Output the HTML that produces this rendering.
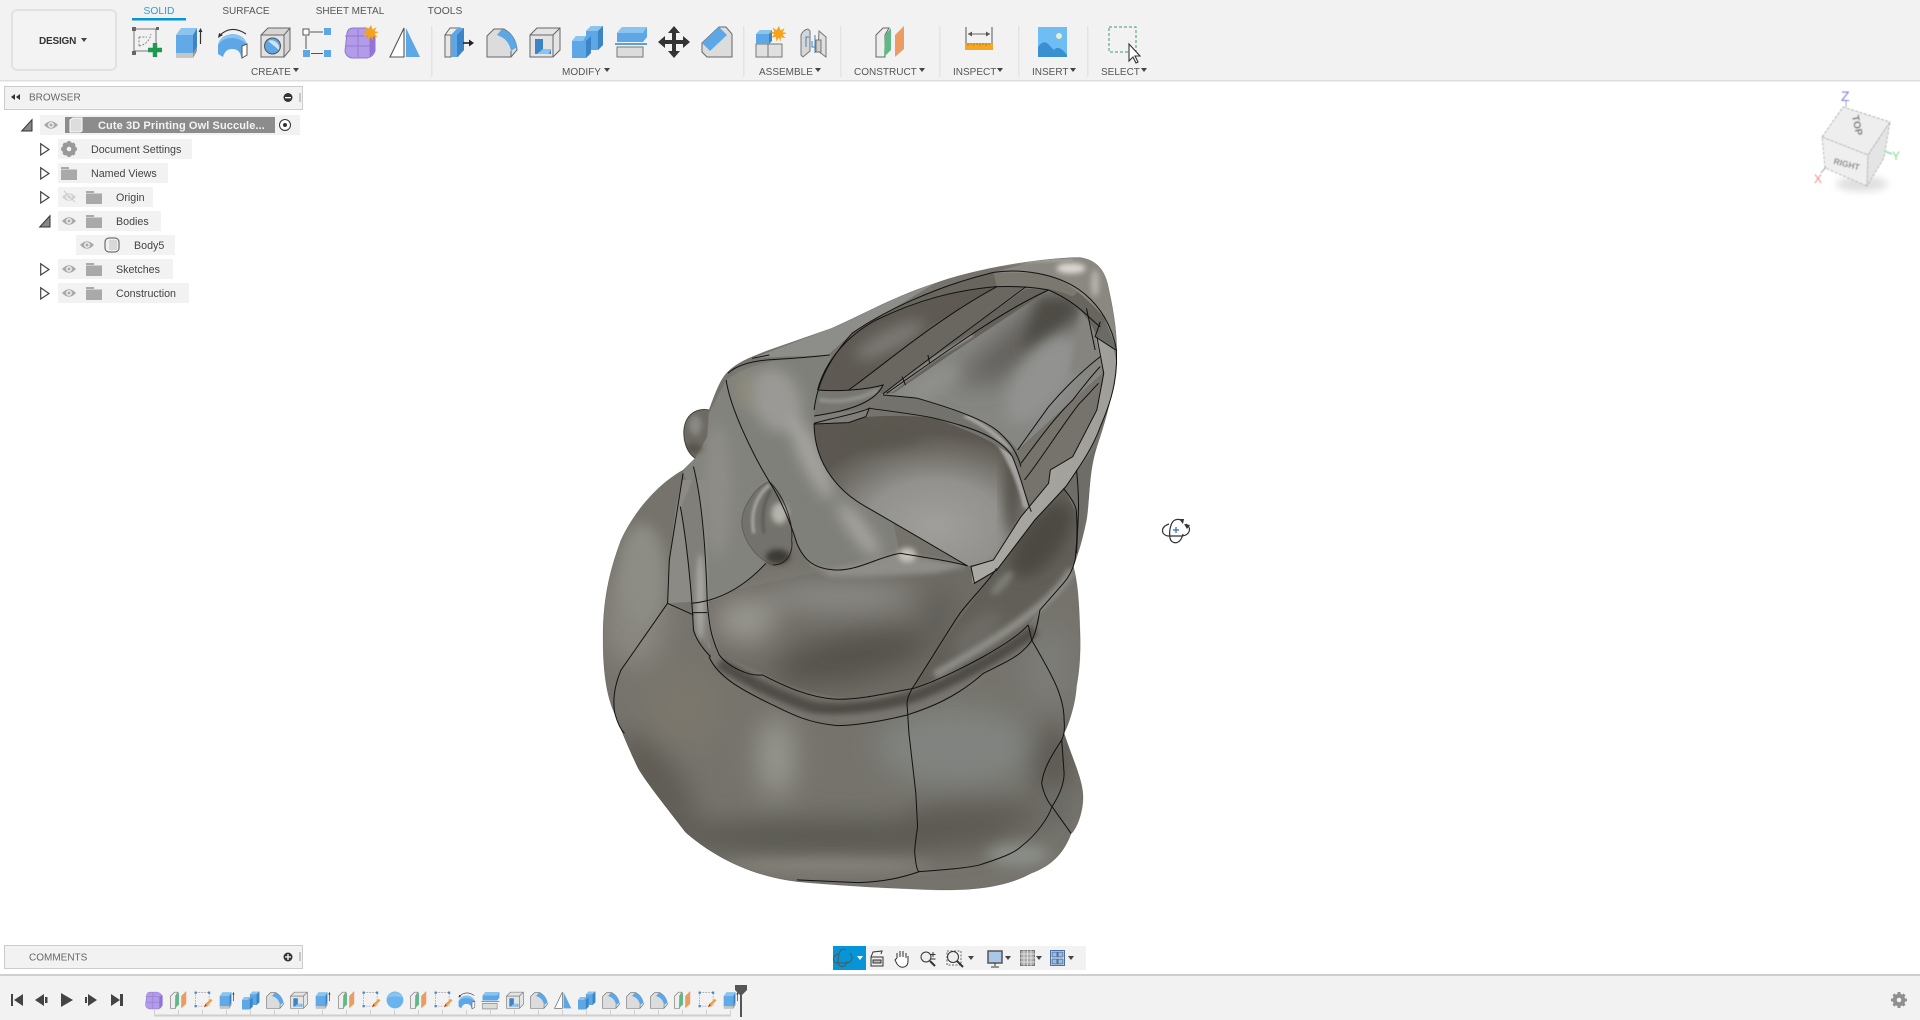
<!DOCTYPE html>
<html><head><meta charset="utf-8"><title>Fusion 360</title>
<style>
html,body{margin:0;padding:0;background:#fff;width:1920px;height:1020px;overflow:hidden}
svg{display:block;position:absolute;left:0;top:0}
text{font-family:"Liberation Sans",sans-serif;fill:#555;font-size:10px}
.t{font-size:10.700px;fill:#444}
.e{fill:none;stroke:#111;stroke-width:1;vector-effect:non-scaling-stroke}
</style></head><body>
<svg width="1920" height="1020" viewBox="0 0 1920 1020" xmlns="http://www.w3.org/2000/svg">
<defs>
<filter id="b40" x="-60%" y="-60%" width="220%" height="220%"><feGaussianBlur stdDeviation="40"/></filter>
<filter id="b20" x="-50%" y="-50%" width="200%" height="200%"><feGaussianBlur stdDeviation="20"/></filter>
<filter id="b8" x="-50%" y="-50%" width="200%" height="200%"><feGaussianBlur stdDeviation="8"/></filter>
<filter id="s1" x="-20%" y="-20%" width="140%" height="140%"><feGaussianBlur stdDeviation=".5"/></filter>
<filter id="s4" x="-50%" y="-50%" width="200%" height="200%"><feGaussianBlur stdDeviation="4"/></filter>
<clipPath id="sil"><path id="silp" d="M1420 52C1470 60 1495 90 1505 150C1520 220 1530 290 1527 350C1525 430 1500 530 1470 620C1445 700 1450 780 1440 840C1430 890 1420 930 1402 980C1412 1020 1418 1060 1421 1170C1424 1250 1418 1300 1411 1340C1408 1390 1390 1450 1375 1480C1400 1560 1430 1620 1430 1672C1430 1720 1410 1770 1395 1782C1370 1850 1330 1880 1280 1900C1200 1945 1100 1952 1000 1950C850 1945 700 1935 600 1925C480 1910 370 1860 278 1778C220 1700 150 1610 135 1575C110 1520 90 1470 75 1428C50 1380 38 1300 38 1210C36 1100 50 1010 90 900C130 810 200 730 270 690L305 655C270 630 265 570 280 540C295 510 325 505 345 510C360 470 375 420 400 395C430 365 470 350 520 330L700 265C800 220 880 170 1000 130C1120 85 1300 55 1420 52Z"/></clipPath>
<clipPath id="cav"><path d="M650 550C760 530 900 520 1000 535C1100 560 1190 590 1225 650C1250 710 1265 780 1280 830L1180 960L1095 978L950 890L800 800C730 760 650 680 650 550Z"/></clipPath>
<clipPath id="wall"><path d="M850 465C920 390 1100 260 1265 140L1330 150C1400 170 1450 220 1480 280L1485 400L1240 630C1200 570 1100 520 950 475Z"/></clipPath>
<radialGradient id="bowl" gradientUnits="userSpaceOnUse" cx="1000" cy="860" r="400" gradientTransform="translate(0 258) scale(1 .7)"><stop offset="0" stop-color="#a09f9b"/><stop offset=".5" stop-color="#92918d"/><stop offset=".8" stop-color="#716e68"/><stop offset="1" stop-color="#5c5851"/></radialGradient>
<linearGradient id="strip" x1="0" y1="0" x2="1" y2="0"><stop offset="0" stop-color="#aba9a3"/><stop offset="1" stop-color="#9f9e98"/></linearGradient>

<g id="caret"><path d="M0 0h6l-3 4z" fill="#444"/></g>

<g id="sketch"><path d="M3 3h22v22H3z" fill="none" stroke="#777"/><g fill="#666"><rect x="1" y="1" width="4" height="4"/><rect x="25" y="1" width="3" height="3"/><rect x="1" y="25" width="4" height="4"/></g><path d="M8 11h8M8 11v9M8 20Q18 18 20 8" fill="none" stroke="#888" stroke-dasharray="2 1.400"/><path d="M17 24h14M24 17v14" stroke="#1d9a50" stroke-width="4.400" fill="none"/></g>
<g id="sketch2"><path d="M3 3h24v24H3z" fill="none" stroke="#888" stroke-dasharray="3 2"/><g fill="#3d86c8"><rect x="1" y="1" width="4" height="4"/><rect x="25" y="1" width="4" height="4"/><rect x="1" y="25" width="4" height="4"/></g><path d="M18 29l2-6 10-9 3 3-10 10z" fill="#f0a03c"/><path d="M18 29l2-6 3 3z" fill="#c33"/></g>
<g id="extrude"><path d="M3 9h17v19H3z" fill="#62a9e8"/><path d="M3 9l5-7h16l-4 7z" fill="#8cc4f0"/><path d="M20 9l4-7v19l-4 7z" fill="#3d84c6"/><path d="M3 27h17v5H3z" fill="#c6c6c6"/><path d="M20 28l4-7v4l-4 7z" fill="#999"/><path d="M27.500 18V3" stroke="#333" stroke-width="1.200"/><path d="M25.500 6l2-4 2 4z" fill="#333"/></g>
<g id="revolve"><path d="M1 19Q3 9 16 8Q27 9 30 18L30 29L24 31Q23 23 15 23Q8 23 6 31L1 28z" fill="#5da7e6"/><path d="M1 19Q3 9 16 8Q27 9 30 18Q22 12 15 12Q6 12 1 19z" fill="#8bc3f0"/><path d="M25 20l5-2v11l-5 3z" fill="#fff" stroke="#555"/><path d="M2 10Q14 -2 29 8" fill="none" stroke="#333" stroke-width="1.100"/><path d="M1 12l1-5 4 2z" fill="#333"/></g>
<g id="hole"><path d="M1 9L8 2H30V24L24 31H1z" fill="#d6d6d6" stroke="#666"/><path d="M24 31V9L30 2M24 9H1" fill="none" stroke="#666"/><path d="M1 9h23v22H1z" fill="#e2e2e2" stroke="#666"/><circle cx="12.500" cy="20" r="8" fill="#5da7e6" stroke="#555"/><path d="M8 15a8 8 0 0 1 11 9z" fill="#cfe3f4"/></g>
<g id="box"><rect x="0" y="3" width="6" height="6" fill="#fff" stroke="#555"/><rect x="21" y="2" width="7" height="7" fill="#5da7e6"/><rect x="0" y="24" width="7" height="7" fill="#5da7e6"/><rect x="21" y="24" width="7" height="7" fill="#5da7e6"/><path d="M7 6h13M3 10v13M8 27.500h12" stroke="#555" fill="none"/></g>
<g id="form"><path d="M3 7Q4 2 9 2H22Q29 4 31 10V25Q29 31 23 32H8Q2 31 1 25z" fill="#b29be8" stroke="#9078d4"/><path d="M26 10V31M1 10H26" stroke="#9078d4" fill="none"/><path d="M14 3V31M2 20H26" stroke="#8a6ec8" fill="none" opacity=".7"/><path d="M26 10l5-3v18l-5 6z" fill="#9274d8"/></g>
<g id="star"><path d="M8 0l1.600 4.500 4-2.500-2 4.300 4.400.7-4.400 1.700 3 3.500-4.600-1-.6 4.800L8 11.500 5.500 15.500l-.6-4.800-4.600 1 3-3.500L-1 6.500l4.400-.7-2-4.300 4 2.500z" fill="#f6a21c"/></g>
<g id="mirror"><path d="M1 31L15 2V31z" fill="#fff" stroke="#555" stroke-width="1.100"/><path d="M17 2L31 31H17z" fill="#5da7e6"/></g>
<g id="presspull"><path d="M1 9L6 2h10L12 9z" fill="#eee" stroke="#666"/><path d="M1 9h6v22H1z" fill="#e8e8e8" stroke="#666"/><path d="M7 9h6v22H7z" fill="#b9cde0"/><path d="M13 9l5-7h-5L7 9z" fill="#8cc4f0"/><path d="M14 2h6v22l-6 7H7V9z" fill="#5da7e6"/><path d="M13 9v22l7-7V2z" fill="#3d84c6"/><path d="M19 17h7" stroke="#222" stroke-width="1.600"/><path d="M25 13.500l5 3.500-5 3.500z" fill="#222"/></g>
<g id="fillet"><path d="M1 10L8 3H18Q30 10 31 24L25 31H1z" fill="#dcdcdc" stroke="#666"/><path d="M16 3Q28 7 31 21L25 25Q23 13 11 9z" fill="#5da7e6"/><path d="M25 31V25" stroke="#666"/></g>
<g id="shell"><path d="M1 9L8 2H31V24L24 31H1z" fill="#e4e4e4" stroke="#666"/><path d="M1 9h23v22M24 9l7-7" fill="none" stroke="#666"/><path d="M6 13h8v10h8v5H6z" fill="#3d84c6"/><path d="M14 23h8l-2 5H8z" fill="#8cc4f0"/></g>
<g id="combine"><path d="M0 16l4-5h10V6l5-5h12v19l-5 5h-7v3l-5 5H0z" fill="#5da7e6"/><path d="M14 6l5-5h12l-5 5zM0 16l4-5h10l-3 5z" fill="#8cc4f0"/><path d="M26 6l5-5v19l-5 5z" fill="#3d84c6"/><path d="M14 16l5-5v17l-5 5z" fill="#3d84c6"/></g>
<g id="split"><path d="M1 8l5-6h25v10l-4 5H1z" fill="#5da7e6"/><path d="M1 8l5-6h25l-4 6z" fill="#8cc4f0"/><path d="M-1 19h32" stroke="#2b86c8" stroke-width="1.500"/><path d="M1 22h26v10H1z" fill="#dcdcdc" stroke="#777"/></g>
<g id="move"><path d="M16 0l6 7h-4v7h7v-4l7 6-7 6v-4h-7v7h4l-6 7-6-7h4v-7H7v4L0 16l7-6v4h7V7h-4z" fill="#333"/></g>
<g id="chamfer"><path d="M1 17L18 1H25L31 8V31H6L1 26z" fill="#dcdcdc" stroke="#666"/><path d="M1 17L18 1L26 9L9 25z" fill="#5da7e6"/></g>
<g id="newcomp"><path d="M1 18h12v13H1zM13 18h14v13H13z" fill="#e0e0e0" stroke="#777"/><path d="M1 8l4-4h10l-0 4v10H1z" fill="#5da7e6"/><path d="M1 8l4-4h12l-3 4z" fill="#8cc4f0"/><path d="M14 8l3-4v11l-3 3z" fill="#3d84c6"/></g>
<g id="joint"><path d="M1 8Q3 3 8 2L10 4V24L3 30L1 28z" fill="#d6d6d6" stroke="#777"/><path d="M19 4L26 10V30L18 24z" fill="#e0e0e0" stroke="#777"/><path d="M15 8V26" stroke="#3d84c6"/><path d="M6 20V10h3M12 14v6h6" stroke="#3d84c6" fill="none"/><rect x="16" y="13" width="5" height="12" fill="#ccc" stroke="#777"/></g>
<g id="plane"><path d="M1 9L8 2H14L10 9V31H1z" fill="#eee" stroke="#666"/><path d="M10 9l6-7V24L9 31z" fill="#5fb885"/><path d="M20 9l9-9V23l-9 8z" fill="#ea9c63"/></g>
<g id="measure"><path d="M1 7v16M27 7v16" stroke="#666" stroke-width="1.100"/><path d="M3 14h22" stroke="#666"/><path d="M7 11.500l-4 2.500 4 2.500zM21 11.500l4 2.500-4 2.500z" fill="#555"/><rect x="0" y="23" width="28" height="7" fill="#f5a623"/><path d="M3 23v3M6 23v2M9 23v3M12 23v2M15 23v3M18 23v2M21 23v3M24 23v2" stroke="#a86e10" stroke-width=".7"/></g>
<g id="image"><rect x="0" y="0" width="29" height="30" fill="#6fbdf5"/><circle cx="21" cy="9" r="3" fill="#e8f0c8"/><path d="M0 30V20Q6 11 12 19L16 23Q21 17 29 28V30z" fill="#3a8fd0"/></g>
<g id="select"><rect x="1" y="1" width="27" height="25" fill="none" stroke="#3c9e66" stroke-width="1" stroke-dasharray="3 2"/><path d="M21 18V35l4-4 3 6 2-1-3-6h5z" fill="#fff" stroke="#333" stroke-width="1.100"/></g>
<g id="sphere"><circle cx="16" cy="16" r="15" fill="#69b3ee"/><path d="M2 12A15 15 0 0 1 30 12Q16 7 2 12z" fill="#8cc4f0"/></g>

<g id="eye"><path d="M0 4.500Q7 -3 14 4.500Q7 12 0 4.500z" fill="#aaa"/><circle cx="7" cy="4.500" r="2.900" fill="#f2f2f2"/><circle cx="7" cy="4.500" r="1.500" fill="#aaa"/></g>
<g id="folder"><path d="M0 1h8v2h8v11H0z" fill="#a9a9a9"/><path d="M0 3.500h16" stroke="#ddd" stroke-width=".7"/></g>
<g id="tri"><path d="M.7 .7L9 6.500 .7 12z" fill="#fff" stroke="#444" stroke-width="1.200"/></g>
<g id="tridown"><path d="M11 .7V12H.7z" fill="#888" stroke="#333" stroke-width="1"/></g>
</defs>

<!-- TOP TOOLBAR -->
<rect x="0" y="0" width="1920" height="81" fill="#f2f2f2"/>
<rect x="0" y="80" width="1920" height="1.500" fill="#dedede"/>
<rect x="12" y="10" width="104" height="60" rx="5" fill="#f3f3f3" stroke="#e2e2e2" stroke-width="2"/>
<text x="39" y="44" style="font-size:10px;fill:#333;font-weight:bold;letter-spacing:-.2px">DESIGN</text><use href="#caret" x="81" y="38"/>
<text x="159" y="14" text-anchor="middle" style="fill:#2d9cd6;font-size:10.300px">SOLID</text>
<rect x="132" y="18" width="54" height="2.500" fill="#0696d7"/>
<text x="246" y="14" text-anchor="middle" style="font-size:10px">SURFACE</text>
<text x="350" y="14" text-anchor="middle" style="font-size:10px">SHEET METAL</text>
<text x="445" y="14" text-anchor="middle" style="font-size:10.300px">TOOLS</text>

<g fill="#e4e4e4"><rect x="431" y="26" width="1.500" height="51"/><rect x="743" y="26" width="1.500" height="51"/><rect x="840" y="26" width="1.500" height="51"/><rect x="939" y="26" width="1.500" height="51"/><rect x="1018" y="26" width="1.500" height="51"/><rect x="1087" y="26" width="1.500" height="51"/></g>

<use href="#sketch" x="131" y="26"/><use href="#extrude" x="173" y="26"/><use href="#revolve" x="217" y="26"/><use href="#hole" x="260" y="26"/><use href="#box" x="303" y="26"/><use href="#form" x="344" y="26"/><use href="#star" x="363" y="25"/><use href="#mirror" x="389" y="26"/>
<use href="#presspull" x="444" y="26"/><use href="#fillet" x="486" y="26"/><use href="#shell" x="529" y="26"/><use href="#combine" x="572" y="25"/><use href="#split" x="616" y="25"/><use href="#move" x="658" y="26"/><use href="#chamfer" x="701" y="26"/>
<use href="#newcomp" x="755" y="26"/><use href="#star" x="771" y="26"/><use href="#joint" x="800" y="27"/>
<use href="#plane" x="875" y="26"/><use href="#measure" x="965" y="20"/><use href="#image" x="1038" y="27"/><use href="#select" x="1108" y="26"/>

<text x="251" y="75">CREATE</text><use href="#caret" x="293" y="68"/>
<text x="562" y="75">MODIFY</text><use href="#caret" x="604" y="68"/>
<text x="759" y="75">ASSEMBLE</text><use href="#caret" x="815" y="68"/>
<text x="854" y="75">CONSTRUCT</text><use href="#caret" x="919" y="68"/>
<text x="953" y="75">INSPECT</text><use href="#caret" x="997" y="68"/>
<text x="1032" y="75">INSERT</text><use href="#caret" x="1070" y="68"/>
<text x="1101" y="75">SELECT</text><use href="#caret" x="1141" y="68"/>

<!-- BROWSER -->
<rect x="4.500" y="86.500" width="298" height="23" fill="#f2f2f2" stroke="#ccc"/>
<path d="M20 94v6l-4-3zM15 94v6l-4-3z" fill="#333"/>
<text x="29" y="100.500" style="font-size:10px;fill:#666">BROWSER</text>
<circle cx="288" cy="97.500" r="4.500" fill="#333"/><rect x="285" y="97" width="6" height="1.300" fill="#fff"/>
<path d="M300 93v9" stroke="#999"/>

<rect x="40" y="115" width="260" height="20" fill="#f2f2f2"/>
<use href="#tridown" x="21" y="119"/>
<use href="#eye" x="44" y="120.500"/>
<rect x="65" y="117" width="210" height="16" fill="#8c8c8c"/>
<path d="M70 120l3-2h9v13l-2 1H70z" fill="#ddd" stroke="#fff"/>
<text x="98" y="129" style="font-size:11px;font-weight:bold;fill:#f4f4f4;letter-spacing:.1px">Cute 3D Printing Owl Succule...</text>
<circle cx="285" cy="125" r="5.500" fill="#fff" stroke="#333"/><circle cx="285" cy="125" r="2" fill="#333"/>

<rect x="58" y="139" width="134" height="20" fill="#f2f2f2"/>
<use href="#tri" x="40" y="143"/>
<g transform="translate(69 149)"><circle r="5" fill="none" stroke="#999" stroke-width="4"/><path d="M-1.500-8h3v16h-3zM-8-1.500h16v3h-16zM-6.600-4.500l2.100-2.100 11.100 11.100-2.100 2.100zM4.500-6.600l2.100 2.100L-4.500 6.600l-2.100-2.100z" fill="#999"/><circle r="2.300" fill="#f2f2f2"/></g>
<text class="t" x="91" y="153">Document Settings</text>

<rect x="58" y="163" width="110" height="20" fill="#f2f2f2"/>
<use href="#tri" x="40" y="167"/><use href="#folder" x="61" y="166"/>
<text class="t" x="91" y="177">Named Views</text>

<rect x="58" y="187" width="95" height="20" fill="#f2f2f2"/>
<use href="#tri" x="40" y="191"/>
<g opacity=".45"><use href="#eye" x="62" y="192.500"/><path d="M64 191l11 11" stroke="#999"/></g>
<use href="#folder" x="86" y="190"/>
<text class="t" x="116" y="201">Origin</text>

<rect x="58" y="211" width="103" height="20" fill="#f2f2f2"/>
<use href="#tridown" x="39" y="215"/>
<use href="#eye" x="62" y="216.500"/><use href="#folder" x="86" y="214"/>
<text class="t" x="116" y="225">Bodies</text>

<rect x="76" y="235" width="99" height="20" fill="#f2f2f2"/>
<use href="#eye" x="80" y="240.500"/>
<rect x="105" y="238" width="14" height="14" rx="4" fill="#f0f0f0" stroke="#555"/><rect x="109" y="240" width="8" height="10" fill="#d8d8d8"/>
<text class="t" x="134" y="249">Body5</text>

<rect x="58" y="259" width="115" height="20" fill="#f2f2f2"/>
<use href="#tri" x="40" y="263"/>
<use href="#eye" x="62" y="264.500"/><use href="#folder" x="86" y="262"/>
<text class="t" x="116" y="273">Sketches</text>

<rect x="58" y="283" width="131" height="20" fill="#f2f2f2"/>
<use href="#tri" x="40" y="287"/>
<use href="#eye" x="62" y="288.500"/><use href="#folder" x="86" y="286"/>
<text class="t" x="116" y="297">Construction</text>

<!-- MODEL -->
<g transform="translate(590,240) scale(.3448,.3333)">
<g clip-path="url(#sil)">
<rect x="0" y="0" width="1600" height="2000" fill="#75736c"/>
<!-- lower body -->
<g filter="url(#b40)">
<ellipse cx="700" cy="1790" rx="520" ry="50" fill="#585650"/>
<ellipse cx="540" cy="1550" rx="50" ry="120" fill="#9a9992"/>
<ellipse cx="1060" cy="1520" rx="230" ry="120" fill="#80837f"/>
<ellipse cx="1340" cy="1560" rx="60" ry="110" fill="#5b5751"/>
<ellipse cx="1120" cy="1730" rx="210" ry="50" fill="#5f5c54"/>
<ellipse cx="190" cy="1620" rx="70" ry="170" fill="#5f5c54" transform="rotate(-35 190 1620)"/>
<ellipse cx="130" cy="1130" rx="90" ry="150" fill="#8a8880"/>
<ellipse cx="270" cy="1400" rx="120" ry="130" fill="#7a776d"/>
<ellipse cx="1330" cy="1280" rx="70" ry="120" fill="#7d7d78"/>
</g>
<g filter="url(#b20)">
<ellipse cx="690" cy="1875" rx="300" ry="14" fill="#8f8d83"/>
<ellipse cx="1240" cy="1845" rx="90" ry="34" fill="#8b8e88"/>
<ellipse cx="1350" cy="1700" rx="40" ry="60" fill="#6c6c66"/>
</g>
<!-- collar -->
<path d="M345 1250C370 1310 440 1350 520 1390C630 1450 720 1457 920 1425L1100 1350L1285 1200L1300 1130C1200 1220 1040 1300 940 1345C800 1395 680 1385 520 1305L375 1245z" fill="#77756e"/>
<path d="M375 1268C450 1320 550 1370 640 1400C720 1415 840 1400 945 1368C1060 1320 1190 1250 1290 1170" fill="none" stroke="#4f4c46" stroke-width="34" filter="url(#b8)"/>
<!-- head -->
<path d="M345 1060C500 1040 650 990 780 975L1110 980L1180 985C1100 1100 1000 1260 938 1345C820 1395 680 1385 500 1300L380 1245C345 1150 340 1100 345 1060z" fill="#6f6c65"/>
<g filter="url(#b40)">
<ellipse cx="760" cy="1250" rx="230" ry="70" fill="#55524c" transform="rotate(-12 760 1250)"/>
<ellipse cx="450" cy="1140" rx="90" ry="70" fill="#97968f"/>
<ellipse cx="720" cy="1070" rx="220" ry="45" fill="#8c8b86"/>
<ellipse cx="1010" cy="1130" rx="50" ry="100" fill="#62605a"/>
</g>
<!-- upper left head -->
<path d="M395 420C470 360 600 350 700 345L650 540C650 650 760 770 880 850L900 950C800 990 700 1000 640 980C590 900 560 820 520 725C460 630 420 520 395 420z" fill="#80807a"/>
<g filter="url(#b20)">
<ellipse cx="540" cy="480" rx="70" ry="100" fill="#9a9995" transform="rotate(-20 540 480)"/>
<ellipse cx="640" cy="650" rx="30" ry="140" fill="#a5a4a0" transform="rotate(-24 640 650)"/>
<ellipse cx="450" cy="450" rx="30" ry="60" fill="#8c8a7e"/>
<ellipse cx="780" cy="870" rx="25" ry="100" fill="#a5a49f" transform="rotate(-35 780 870)"/>
</g>
<path d="M640 980C700 1000 800 960 890 940L1100 978L1000 1000L800 1010L700 1010z" fill="#8f8e88" filter="url(#b8)"/>
<ellipse cx="920" cy="945" rx="26" ry="22" fill="#c4c2ba" filter="url(#b8)"/>
<!-- side left -->
<path d="M270 700L345 520L395 420C420 520 460 630 520 725L590 900L510 970C430 1050 380 1080 340 1085C330 950 310 800 270 700z" fill="#83837e"/>
<ellipse cx="370" cy="750" rx="40" ry="200" fill="#8e8d88" filter="url(#b20)"/>
<ellipse cx="150" cy="1000" rx="70" ry="150" fill="#8d8c85" filter="url(#b20)"/>
<path d="M268 720L340 720C340 900 345 1050 345 1200L350 1230L305 1170L295 1085L225 1090C230 960 240 820 268 720z" fill="#8b8a85"/>
<path d="M265 800C280 950 295 1050 300 1170L345 1240C345 1080 335 900 305 700z" fill="#7d7b73" opacity=".7"/>
<ellipse cx="320" cy="1070" rx="12" ry="130" fill="#a9a8a2" filter="url(#b8)"/>
<!-- ear back -->
<path d="M345 510C325 505 295 510 280 540C265 570 270 630 305 655L340 590z" fill="#6d6a63"/>
<ellipse cx="305" cy="555" rx="18" ry="30" fill="#8a8985" filter="url(#b8)"/>
<ellipse cx="300" cy="625" rx="25" ry="14" fill="#55524c" filter="url(#b8)"/>
<!-- neck top -->
<path d="M470 355L700 265C800 220 880 170 1000 130L760 280L690 345C600 350 530 350 470 355z" fill="#8d8d89"/>
<!-- bowl -->
<path d="M650 550C760 530 900 520 1000 535C1100 560 1190 590 1225 650C1250 710 1265 780 1280 830L1180 960L1095 978L950 890L800 800C730 760 650 680 650 550Z" fill="url(#bowl)"/>
<g clip-path="url(#cav)">
<ellipse cx="830" cy="590" rx="130" ry="35" fill="#5a5650" filter="url(#b20)"/>
<ellipse cx="1225" cy="760" rx="22" ry="130" fill="#4f4b45" filter="url(#b20)"/>
<path d="M1165 590C1200 640 1240 720 1255 800L1280 820L1240 640z" fill="#a4a39f" filter="url(#s4)"/>
</g>
<!-- shelf between wall and bowl -->
<path d="M810 505C880 460 940 470 950 475C1050 505 1150 540 1190 580C1220 610 1240 640 1250 680C1210 620 1120 580 1000 535C930 520 860 510 810 505z" fill="#74726c"/>
<path d="M1100 525C1160 560 1210 600 1230 640L1170 590C1150 570 1120 550 1080 530z" fill="#a7a6a1" filter="url(#s4)"/>
<!-- inner back wall -->
<path d="M850 465C920 390 1100 260 1265 140L1330 150C1400 170 1450 220 1480 280L1485 400L1240 630C1200 570 1100 520 950 475Z" fill="#868683"/>
<g clip-path="url(#wall)">
<path d="M1050 430L1310 190L1400 170L1440 200L1180 420z" fill="#5c5953" filter="url(#b40)"/>
<path d="M1300 170L1400 170L1420 220L1250 340z" fill="#4e4b45" filter="url(#b20)"/>
<ellipse cx="990" cy="430" rx="90" ry="40" fill="#8e8e8b" filter="url(#b20)" transform="rotate(-32 990 430)"/>
<ellipse cx="1310" cy="420" rx="70" ry="150" fill="#929390" filter="url(#b20)" transform="rotate(35 1310 420)"/>
<path d="M1430 190L1480 280L1485 400L1390 400z" fill="#85847f" filter="url(#b8)"/>
<path d="M860 460C1000 340 1150 230 1265 145L1330 150L1050 340L880 460z" fill="#65625c"/>
<path d="M870 455L1000 355L1110 285" fill="none" stroke="#aaa9a4" stroke-width="7" filter="url(#s4)"/>
</g>
<!-- inner left wall -->
<path d="M660 450C680 370 740 290 830 240C950 180 1060 150 1180 140L1000 250L840 380L750 450C720 455 690 455 660 450z" fill="#5e5a53"/>
<ellipse cx="870" cy="300" rx="110" ry="30" fill="#7b7974" filter="url(#b20)" transform="rotate(-28 870 300)"/>
<path d="M750 450L1000 250L1180 140L1265 140L1000 340L850 460z" fill="#6a6760"/>
<!-- lip -->
<path d="M660 450C720 455 800 450 850 435C830 480 770 510 650 525z" fill="#787670"/>
<path d="M665 480C730 490 790 475 835 450" fill="none" stroke="#8e8d88" stroke-width="14" filter="url(#s4)"/>
<path d="M650 530C720 515 790 510 810 505L800 530L750 548L650 552z" fill="#7f7e79"/>
<!-- rim -->
<path d="M650 510C660 420 700 350 760 280C850 215 1000 140 1170 97C1250 85 1350 100 1420 150C1480 195 1515 260 1527 330L1470 290C1450 240 1420 190 1330 150C1280 140 1230 138 1180 140C1060 150 950 180 830 240C740 290 680 370 660 450z" fill="#68655e"/>
<path d="M1170 97C1260 80 1350 100 1420 150L1400 170C1350 145 1280 135 1180 140z" fill="#7b7870"/>
<path d="M1470 290L1527 330L1520 240L1500 230z" fill="#6a6a67"/>
<!-- nose top -->
<path d="M1300 100C1350 100 1420 150 1490 230L1525 320L1540 200L1490 40L1300 60L1170 97z" fill="#8a8880"/>
<ellipse cx="1395" cy="85" rx="42" ry="16" fill="#d9d7cf" filter="url(#b8)"/>
<ellipse cx="1465" cy="130" rx="12" ry="40" fill="#b4b2aa" filter="url(#b8)"/>
<path d="M1170 75C1250 62 1330 60 1400 62" fill="none" stroke="#a5a39a" stroke-width="8" filter="url(#s4)"/>
<!-- right outer shoulder -->
<path d="M1179 985L1290 840L1373 745L1411 820L1407 960L1373 1030L1305 1110L1271 1155L1141 1250L938 1345C1010 1230 1110 1080 1179 985z" fill="#625f58"/>
<ellipse cx="1310" cy="900" rx="60" ry="130" fill="#4c4943" filter="url(#b20)" transform="rotate(35 1310 900)"/>
<ellipse cx="1120" cy="1180" rx="90" ry="35" fill="#6e6c66" filter="url(#b20)" transform="rotate(-42 1120 1180)"/>
<ellipse cx="1195" cy="1030" rx="14" ry="45" fill="#7c7b75" filter="url(#b8)" transform="rotate(40 1195 1030)"/>
<path d="M1398 990C1370 1040 1320 1090 1260 1135C1190 1190 1090 1250 1000 1305" fill="none" stroke="#8f8e88" stroke-width="24" filter="url(#b8)"/>
<path d="M1373 745L1470 620L1450 760L1411 940L1411 820z" fill="#6f6d67"/>
<!-- white strip -->
<path d="M1110 1030L1180 990L1290 840L1380 740C1420 680 1460 620 1480 560C1505 500 1525 440 1527 370L1520 330L1465 290L1490 400L1470 510L1400 650L1335 690L1330 730L1250 830L1170 960L1105 980z" fill="url(#strip)"/>
<!-- ear front -->
<path d="M520 725C480 740 440 800 440 850C445 910 490 960 530 975C570 975 590 940 585 900C590 850 565 770 520 725z" fill="#74726c"/>
<ellipse cx="550" cy="820" rx="24" ry="32" fill="#b5b3ac" filter="url(#b8)"/>
<ellipse cx="545" cy="950" rx="35" ry="22" fill="#3d3a35" filter="url(#b8)"/>
<path d="M520 735C480 770 465 820 475 880" fill="none" stroke="#a8a7a2" stroke-width="9" filter="url(#s4)"/>
<path d="M525 750C505 780 495 830 505 880" fill="none" stroke="#5c5a53" stroke-width="8" filter="url(#s4)"/>
</g>
<!-- EDGES -->
<g>
<path class="e" d="M650 510C660 420 700 350 760 280C850 215 1000 140 1170 97C1250 85 1350 100 1420 150C1480 195 1515 260 1527 330"/>
<path class="e" d="M660 450C680 370 740 290 830 240C950 180 1060 150 1180 140C1230 138 1280 140 1330 150C1420 190 1450 240 1480 260"/>
<path class="e" d="M750 450C840 385 1000 240 1180 140M850 462C1000 340 1150 230 1265 140M860 460C1000 360 1180 220 1330 150"/>
<path class="e" d="M660 450C720 455 800 450 850 435C830 480 770 510 650 528M650 550C700 535 780 520 810 505L800 530L750 548L650 552M905 410L915 435M980 345L985 370"/>
<path class="e" d="M650 550C650 680 730 760 800 800L950 890L1095 978"/>
<path class="e" d="M810 505C880 515 960 525 1000 535C1100 560 1190 590 1225 650C1250 710 1265 780 1280 815"/>
<path class="e" d="M850 465C880 468 930 472 950 475C1050 505 1150 540 1190 580C1220 610 1240 640 1250 680"/>
<path class="e" d="M1240 630L1330 500C1380 440 1430 390 1480 350M1250 670C1300 600 1350 530 1400 480C1430 440 1460 400 1480 380M1260 720C1300 670 1380 540 1420 490C1440 470 1460 445 1475 430"/>
<path class="e" d="M1440 205L1465 330M1480 245L1465 290L1525 330M1470 290L1490 400L1470 510L1400 650L1335 690L1330 730L1250 830L1170 960L1105 980L1115 1030L1180 990L1290 840L1380 740C1420 680 1460 620 1480 560C1505 500 1525 440 1527 370V330"/>
<path class="e" d="M400 400C430 370 490 360 540 358C600 355 650 350 695 345M470 355L520 345"/>
<path class="e" d="M395 420C405 500 470 640 520 725C560 790 585 860 600 910C620 960 650 990 720 990C780 990 840 950 900 940C950 950 1040 960 1095 978"/>
<path class="e" d="M270 700L230 960L225 1090M262 800C280 900 295 1050 300 1170C305 1190 320 1220 350 1250M300 680C320 760 335 900 340 1085C345 1150 350 1190 375 1245C400 1280 460 1310 500 1305C550 1330 630 1375 720 1378C790 1378 860 1360 940 1345C1000 1325 1070 1290 1141 1250C1190 1220 1240 1190 1271 1155"/>
<path class="e" d="M225 1090L90 1290C70 1340 65 1380 72 1420C80 1450 90 1470 100 1480M225 1090L300 1125M295 1090C350 1085 430 1060 510 970M297 1118L340 1118"/>
<path class="e" d="M345 1250C370 1310 440 1350 520 1390C580 1420 630 1450 720 1457C790 1455 860 1440 920 1425C980 1405 1060 1375 1141 1300C1200 1270 1240 1250 1257 1230C1275 1215 1285 1195 1286 1190"/>
<path class="e" d="M1179 985C1160 1020 1110 1070 1073 1120C1040 1170 1000 1240 938 1340C920 1370 918 1390 920 1400L925 1480L945 1660L950 1760C945 1800 940 1830 942 1840C945 1880 950 1895 955 1895C1020 1890 1090 1885 1130 1875C1190 1855 1230 1840 1250 1820C1300 1780 1330 1730 1340 1700C1365 1660 1375 1630 1375 1600L1368 1500C1350 1530 1315 1580 1310 1630C1315 1660 1330 1690 1340 1700L1395 1780"/>
<path class="e" d="M1271 1155L1281 1200C1330 1290 1375 1360 1375 1440C1378 1480 1372 1490 1368 1500"/>
<path class="e" d="M955 1895C900 1915 850 1925 780 1928L600 1920"/>
<path class="e" d="M1411 690C1416 740 1418 790 1416 830L1411 940"/>
<path class="e" d="M1373 745C1400 780 1411 800 1411 820C1415 880 1410 930 1407 960C1400 990 1390 1010 1373 1030L1305 1110C1300 1140 1295 1170 1286 1190"/>
<path d="M345 510C325 505 295 510 280 540C265 570 270 630 305 655" class="e" opacity=".55"/>
<path d="M520 725C480 740 440 800 440 850C445 910 490 960 530 975" class="e" opacity=".25"/>
<path d="M520 725C565 770 590 850 585 900C590 940 570 975 530 975" class="e" opacity=".8"/>
<use href="#silp" class="e" opacity=".4"/>
</g>
</g>

<!-- VIEW CUBE -->
<g filter="url(#s1)">
<ellipse cx="1862" cy="184" rx="26" ry="7" fill="#ddd" filter="url(#s4)"/>
<path d="M1822 137L1843 107L1890 122L1868 155z" fill="#eee" stroke="#999" stroke-dasharray="3 1.500" stroke-width=".8"/>
<path d="M1822 137L1868 155L1867 186L1825 168z" fill="#efefef" stroke="#aaa" stroke-dasharray="3 1.500" stroke-width=".8"/>
<path d="M1868 155L1890 122L1884 158L1867 186z" fill="#e4e4e4" stroke="#aaa" stroke-dasharray="3 1.500" stroke-width=".8"/>
<text transform="translate(1854 126) rotate(78)" style="font-size:10px;font-weight:bold;fill:#777" text-anchor="middle">TOP</text>
<text transform="translate(1846 167) rotate(14)" style="font-size:8.500px;font-weight:bold;fill:#888" text-anchor="middle">RIGHT</text>
<path d="M1846 100v7M1826 167l-5 6" stroke="#9aa" fill="none"/>
<path d="M1884 151l8 3" stroke="#a6e0b0" stroke-width="2"/>
<text x="1841" y="101" style="font-size:14px;fill:#7f80e0">Z</text>
<text x="1892" y="160" style="font-size:12px;fill:#7fdc90">Y</text>
<text x="1814" y="183" style="font-size:12px;fill:#ee8a84">X</text>
</g>

<!-- ORBIT CURSOR -->
<g transform="translate(1176 530)" fill="none" stroke="#333" stroke-width="1.200">
<path d="M5-10C-6-14-7 2-6 8S4 16 7 4"/>
<path d="M-7-6C-16-3-15 5-8 6H6C14 5 16-2 10-6"/>
<path d="M-3 0H3M0-3V3" stroke="#2b6cb0"/>
<path d="M3-11l5 0-1 5zM8-6l6 1-3 4z" fill="#333" stroke="none"/>
</g>

<!-- COMMENTS -->
<rect x="4.500" y="945.500" width="298" height="23" fill="#f2f2f2" stroke="#ccc"/>
<text x="29" y="960.500" style="font-size:10px;fill:#666">COMMENTS</text>
<circle cx="288" cy="957" r="4.500" fill="#333"/><path d="M285 957h6M288 954v6" stroke="#fff" stroke-width="1.300"/>
<path d="M300 952v9" stroke="#999"/>

<!-- NAV BAR -->
<rect x="833" y="946" width="253" height="24" fill="#f2f2f2"/>
<rect x="833" y="946" width="33" height="24" fill="#0696d7"/>
<g fill="none" stroke="#333" stroke-width="1">
<g transform="translate(843 958)" stroke="#555"><path d="M3-8C-5-12-5 2-5 5S2 12 4 3"/><path d="M-5-4C-11-2-11 4-6 5H4C10 4 10-2 7-5"/></g>
<g transform="translate(869 951)"><rect x="2" y="6" width="12" height="9" fill="#eee"/><rect x="4" y="9" width="8" height="3" fill="#bbb"/><path d="M2 6L4 1l9-1-1 3"/></g>
<g transform="translate(894 950)"><path d="M3 8V3M6 7V1M9 7V1M12 8V3M3 8L1 10L3 14Q6 18 10 17Q14 16 14 11V6" fill="#fff"/></g>
<g transform="translate(920 951)"><circle cx="6" cy="6" r="5" fill="#eee"/><path d="M10 10l5 5" stroke-width="2"/><path d="M13 1v5M10.500 3.500h5M10.500 8h5"/></g>
<g transform="translate(946 950)"><rect x="1" y="1" width="14" height="14" stroke-dasharray="2 1.500" stroke="#666"/><circle cx="7" cy="7" r="5.500" fill="#eee"/><path d="M11 11l6 6" stroke-width="2"/></g>
<g transform="translate(988 950)"><rect x="0" y="1" width="14" height="12" fill="#a9c8e8" stroke="#555" stroke-width="1.500"/><path d="M7 13v3M3 17h8"/></g>
<g transform="translate(1020 950)" stroke="#777"><rect x=".5" y=".5" width="14" height="15" fill="#aaa"/><path d="M4 0v16M7.500 0v16M11 0v16M0 4h15M0 8h15M0 12h15" stroke="#eee" stroke-width=".7"/></g>
<g transform="translate(1050 950)" stroke="#4a6fa0"><rect x=".5" y=".5" width="14" height="15" fill="#fff"/><rect x="2" y="2" width="5" height="5" fill="#9dbbe0"/><rect x="8" y="2" width="5" height="5" fill="#9dbbe0"/><rect x="2" y="9" width="5" height="5" fill="#9dbbe0"/><rect x="8" y="9" width="5" height="5" fill="#9dbbe0"/></g>
</g>
<path d="M857 956h6l-3 4z" fill="#fff"/>
<use href="#caret" x="968" y="956"/><use href="#caret" x="1005" y="956"/><use href="#caret" x="1036" y="956"/><use href="#caret" x="1068" y="956"/>

<!-- TIMELINE -->
<rect x="0" y="975" width="1920" height="45" fill="#f2f2f2"/>
<rect x="0" y="974" width="1920" height="2" fill="#cfcfcf"/>
<g fill="#444">
<path d="M11 994h2v12h-2zM23 994v12l-9-6z"/>
<path d="M44 994v12l-9-6zM45 997h2.500v6H45z"/>
<path d="M61 993l12 7-12 7z"/>
<path d="M88 994v12l9-6zM85 997h2v6h-2z"/>
<path d="M111 994v12l9-6zM120 994h3v12h-3z"/>
</g>
<g transform="translate(145 991) scale(.56)"><use href="#form"/></g>
<g transform="translate(170 991) scale(.56)"><use href="#plane"/></g>
<g transform="translate(194 991) scale(.56)"><use href="#sketch2"/></g>
<g transform="translate(218 991) scale(.56)"><use href="#extrude"/></g>
<g transform="translate(242 991) scale(.56)"><use href="#combine"/></g>
<g transform="translate(266 991) scale(.56)"><use href="#fillet"/></g>
<g transform="translate(290 991) scale(.56)"><use href="#shell"/></g>
<g transform="translate(314 991) scale(.56)"><use href="#extrude"/></g>
<g transform="translate(338 991) scale(.56)"><use href="#plane"/></g>
<g transform="translate(362 991) scale(.56)"><use href="#sketch2"/></g>
<g transform="translate(386 991) scale(.56)"><use href="#sphere"/></g>
<g transform="translate(410 991) scale(.56)"><use href="#plane"/></g>
<g transform="translate(434 991) scale(.56)"><use href="#sketch2"/></g>
<g transform="translate(458 991) scale(.56)"><use href="#revolve"/></g>
<g transform="translate(482 991) scale(.56)"><use href="#split"/></g>
<g transform="translate(506 991) scale(.56)"><use href="#shell"/></g>
<g transform="translate(530 991) scale(.56)"><use href="#fillet"/></g>
<g transform="translate(554 991) scale(.56)"><use href="#mirror"/></g>
<g transform="translate(578 991) scale(.56)"><use href="#combine"/></g>
<g transform="translate(602 991) scale(.56)"><use href="#fillet"/></g>
<g transform="translate(626 991) scale(.56)"><use href="#fillet"/></g>
<g transform="translate(650 991) scale(.56)"><use href="#fillet"/></g>
<g transform="translate(674 991) scale(.56)"><use href="#plane"/></g>
<g transform="translate(698 991) scale(.56)"><use href="#sketch2"/></g>
<g transform="translate(722 991) scale(.56)"><use href="#extrude"/></g>
<path d="M154 1015.500H731" stroke="#cfcfcf" stroke-width="2"/>
<path d="M154.500 1010v5M178.500 1010v5M202.500 1010v5M226.500 1010v5M250.500 1010v5M274.500 1010v5M298.500 1010v5M322.500 1010v5M346.500 1010v5M370.500 1010v5M394.500 1010v5M418.500 1010v5M442.500 1010v5M466.500 1010v5M490.500 1010v5M514.500 1010v5M538.500 1010v5M562.500 1010v5M586.500 1010v5M610.500 1010v5M634.500 1010v5M658.500 1010v5M682.500 1010v5M706.500 1010v5M730.500 1010v5" stroke="#cfcfcf"/>
<path d="M735 985h12v5l-5 5v22h-2V995l-5-5z" fill="#555"/>

<!-- GEAR -->
<g transform="translate(1899 1000)"><circle r="4.500" fill="none" stroke="#8f8f8f" stroke-width="3.500"/><path d="M-1.500-8h3v16h-3zM-8-1.500h16v3h-16zM-6.600-4.500l2.100-2.100 11.100 11.100-2.100 2.100zM4.500-6.600l2.100 2.100L-4.500 6.600l-2.100-2.100z" fill="#8f8f8f"/><circle r="2.300" fill="#f2f2f2"/></g>
</svg>
</body></html>
